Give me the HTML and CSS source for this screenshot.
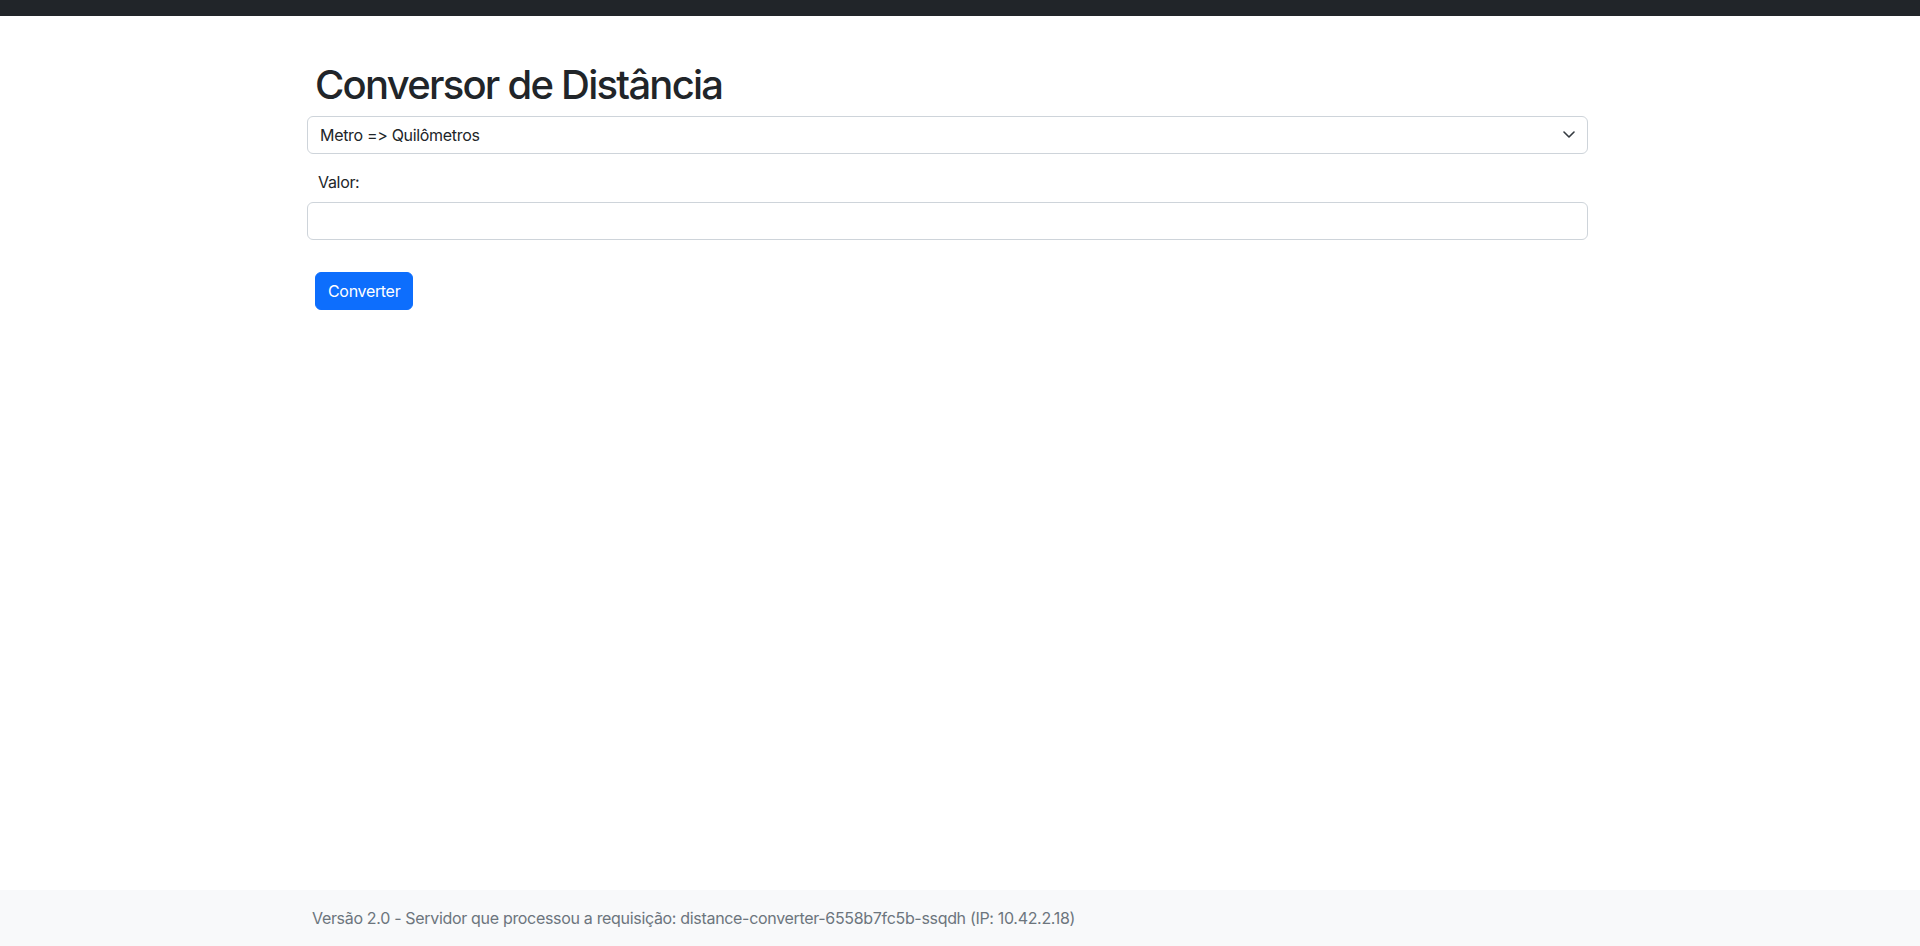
FILE: index.html
```html
<!DOCTYPE html>
<html lang="pt-BR">
<head>
<meta charset="utf-8">
<title>Conversor de Distância</title>
<link rel="stylesheet" href="styles.css">
</head>
<body>
<header class="topbar"></header>
<main class="container">
  <div class="converter">
    <h1 class="title">Conversor de Distância</h1>
    <form class="form">
      <div class="select-wrap">
        <select class="form-select">
          <option>Metro =&gt; Quilômetros</option>
          <option>Quilômetros =&gt; Metro</option>
        </select>
        <svg class="chevron" viewBox="0 0 12 7" width="12" height="7"><path d="M1 1 6 6 11 1" fill="none" stroke="#343a40" stroke-width="1.6" stroke-linecap="round" stroke-linejoin="round"/></svg>
      </div>
      <label class="label" for="valor">Valor:</label>
      <input class="form-control" id="valor" type="text">
      <button class="btn" type="button">Converter</button>
    </form>
  </div>
</main>
<footer class="footer">
  <div class="footer-inner">Versão 2.0 - Servidor que processou a requisição: distance-converter-6558b7fc5b-ssqdh (IP: 10.42.2.18)</div>
</footer>
</body>
</html>
```
FILE: styles.css
```css
* { box-sizing: border-box; }
html, body { height: 100%; }
body {
  margin: 0;
  font-family: Inter, "Noto Sans", "Liberation Sans", sans-serif;
  font-size: 16px;
  line-height: 1.5;
  letter-spacing: -0.32px;
  font-feature-settings: "calt" 0, "liga" 0;
  color: #212529;
  background: #fff;
  display: flex;
  flex-direction: column;
}
.topbar {
  height: 16px;
  background: #212529;
  flex: none;
}
.container {
  flex: 1;
  width: 1320px;
  margin: 0 auto;
  padding: 0 12px;
}
.converter {
  width: 1281px;
  margin-left: -5px;
  padding-top: 45px;
}
.title {
  margin: 0 0 7px;
  padding-left: 8px;
  font-size: 40px;
  font-weight: 500;
  line-height: 1.2;
  letter-spacing: -1.75px;
}
.form { display: flex; flex-direction: column; align-items: stretch; }
.select-wrap { position: relative; }
.form-select {
  display: block;
  width: 100%;
  height: 38px;
  appearance: none;
  -webkit-appearance: none;
  font: inherit;
  font-size: 16px;
  letter-spacing: inherit;
  font-feature-settings: inherit;
  color: #212529;
  background: #fff;
  border: 1px solid #ced4da;
  border-radius: 6px;
  padding: 6px 36px 6px 12px;
  outline: none;
}
.chevron {
  position: absolute;
  right: 13px;
  top: 15px;
  pointer-events: none;
}
.label {
  display: block;
  margin-top: 16px;
  margin-bottom: 8px;
  padding-left: 11px;
  line-height: 24px;
}
.form-control {
  display: block;
  width: 100%;
  height: 38px;
  font: inherit;
  border: 1px solid #ced4da;
  border-radius: 6px;
  padding: 6px 12px;
  outline: none;
}
.btn {
  align-self: flex-start;
  margin: 32px 0 0 8px;
  height: 38px;
  padding: 6px 12px;
  font: inherit;
  letter-spacing: inherit;
  color: #fff;
  background: #0d6efd;
  border: 1px solid #0d6efd;
  border-radius: 6px;
  cursor: pointer;
}
.footer {
  flex: none;
  height: 56px;
  background: #f8f9fa;
  display: flex;
  align-items: center;
}
.footer-inner {
  width: 1320px;
  margin: 0 auto;
  padding: 0 12px;
  color: #6c757d;
}
```
